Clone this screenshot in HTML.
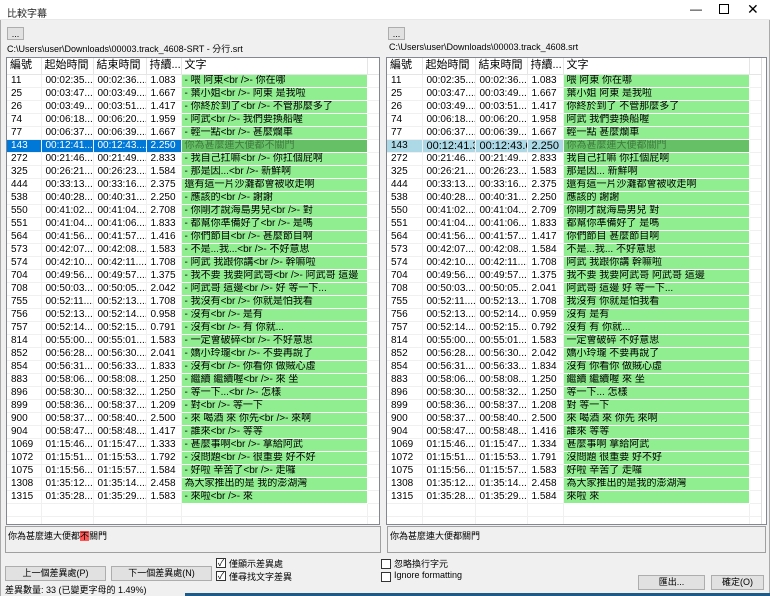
<!DOCTYPE html>
<html><head><meta charset="utf-8"><style>
*{margin:0;padding:0;box-sizing:border-box}
body{width:770px;height:596px;overflow:hidden;background:#f0f0f0;font-family:"Liberation Sans","Noto Sans CJK TC",sans-serif;font-size:11px;color:#000;position:relative}
.abs{position:absolute}
.title{left:0;top:0;width:770px;height:20px;background:#fff;border-bottom:1px solid #e8e8e8}
.btn{position:absolute;background:#e1e1e1;border:1px solid #adadad;font-size:9px;text-align:center;line-height:13px}
.list{position:absolute;top:57px;height:468px;background:#fff;border:1px solid #828790;overflow:hidden}
table{border-collapse:collapse;table-layout:fixed;position:absolute;left:0;top:0}
td,th{height:13px;line-height:12px;font-size:10px;white-space:nowrap;overflow:hidden;padding-left:4px;border-right:1px solid #f0f0f0;border-bottom:1px solid #f0f0f0;font-weight:normal;text-align:left}
th{height:16px;font-size:11px;line-height:15px;border-bottom:1px solid #e5e5e5;border-right:1px solid #e5e5e5;padding-left:3px}
td.t{background:#90ee90;border-right:1px solid #fff;border-bottom:1px solid #fff;font-size:10px;padding-left:3px;max-width:186px;text-overflow:clip}
tr.sel td{background:#0078d7;color:#fff}
tr.sel2 td{background:#add8e6;color:#000}
tr.sel td.t,tr.sel2 td.t{background:#66c066;color:#3d7a3d}
.tb{position:absolute;top:526px;height:27px;border:1px solid #a0a0a0;background:#f0f0f0;font-size:9px;padding:2px 2px}
.cb{position:absolute;width:10px;height:10px;border:1px solid #333;background:#fff;font-size:9px;line-height:8px;text-align:center}
.lbl{position:absolute;font-size:9px}
</style></head><body>
<div class="abs title"></div>
<div class="abs" style="left:7px;top:5px;font-size:10px;color:#222">比較字幕</div>
<div class="abs" style="left:690px;top:2px;font-size:12px">—</div>
<div class="abs" style="left:719px;top:4px;width:10px;height:10px;border:1px solid #000"></div>
<div class="abs" style="left:747px;top:1px;font-size:14px">✕</div>
<div class="abs" style="left:0;top:20px;width:1px;height:576px;background:#aaa"></div>
<div class="abs" style="left:769px;top:20px;width:1px;height:576px;background:#aaa"></div>

<div class="btn" style="left:7px;top:27px;width:17px;height:13px">...</div>
<div class="btn" style="left:388px;top:27px;width:17px;height:13px">...</div>
<div class="abs" style="left:7px;top:42px;font-size:9px">C:\Users\user\Downloads\00003.track_4608-SRT - 分行.srt</div>
<div class="abs" style="left:389px;top:42px;font-size:9px">C:\Users\user\Downloads\00003.track_4608.srt</div>

<div class="list" style="left:6px;width:374px">
<table style="width:372px">
<colgroup><col style="width:34px"><col style="width:52px"><col style="width:53px"><col style="width:35px"><col style="width:186px"><col style="width:12px"></colgroup>
<tr><th>編號</th><th>起始時間</th><th>結束時間</th><th>持續...</th><th>文字</th><th></th></tr>
<tr><td>11</td><td>00:02:35....</td><td>00:02:36....</td><td>1.083</td><td class="t">- 喂 阿東&lt;br /&gt;- 你在哪</td><td></td></tr>
<tr><td>25</td><td>00:03:47....</td><td>00:03:49....</td><td>1.667</td><td class="t">- 葉小姐&lt;br /&gt;- 阿東 是我啦</td><td></td></tr>
<tr><td>26</td><td>00:03:49....</td><td>00:03:51....</td><td>1.417</td><td class="t">- 你終於到了&lt;br /&gt;- 不管那麼多了</td><td></td></tr>
<tr><td>74</td><td>00:06:18....</td><td>00:06:20....</td><td>1.959</td><td class="t">- 阿武&lt;br /&gt;- 我們要換船喔</td><td></td></tr>
<tr><td>77</td><td>00:06:37....</td><td>00:06:39....</td><td>1.667</td><td class="t">- 輕一點&lt;br /&gt;- 甚麼爛車</td><td></td></tr>
<tr class="sel"><td>143</td><td>00:12:41....</td><td>00:12:43....</td><td>2.250</td><td class="t">你為甚麼連大便都不關門</td><td style="background:#fff"></td></tr>
<tr><td>272</td><td>00:21:46....</td><td>00:21:49....</td><td>2.833</td><td class="t">- 我自己扛嘛&lt;br /&gt;- 你扛個屁啊</td><td></td></tr>
<tr><td>325</td><td>00:26:21....</td><td>00:26:23....</td><td>1.584</td><td class="t">- 那是因...&lt;br /&gt;- 新鮮啊</td><td></td></tr>
<tr><td>444</td><td>00:33:13....</td><td>00:33:16....</td><td>2.375</td><td class="t">還有這一片沙灘都會被收走啊</td><td></td></tr>
<tr><td>538</td><td>00:40:28....</td><td>00:40:31....</td><td>2.250</td><td class="t">- 應該的&lt;br /&gt;- 謝謝</td><td></td></tr>
<tr><td>550</td><td>00:41:02....</td><td>00:41:04....</td><td>2.708</td><td class="t">- 你剛才說海島男兒&lt;br /&gt;- 對</td><td></td></tr>
<tr><td>551</td><td>00:41:04....</td><td>00:41:06....</td><td>1.833</td><td class="t">- 都幫你準備好了&lt;br /&gt;- 是嗎</td><td></td></tr>
<tr><td>564</td><td>00:41:56....</td><td>00:41:57....</td><td>1.416</td><td class="t">- 你們節目&lt;br /&gt;- 甚麼節目啊</td><td></td></tr>
<tr><td>573</td><td>00:42:07....</td><td>00:42:08....</td><td>1.583</td><td class="t">- 不是...我...&lt;br /&gt;- 不好意思</td><td></td></tr>
<tr><td>574</td><td>00:42:10....</td><td>00:42:11....</td><td>1.708</td><td class="t">- 阿武 我跟你講&lt;br /&gt;- 幹嘛啦</td><td></td></tr>
<tr><td>704</td><td>00:49:56....</td><td>00:49:57....</td><td>1.375</td><td class="t">- 我不要 我要阿武哥&lt;br /&gt;- 阿武哥 這邊</td><td></td></tr>
<tr><td>708</td><td>00:50:03....</td><td>00:50:05....</td><td>2.042</td><td class="t">- 阿武哥 這邊&lt;br /&gt;- 好 等一下...</td><td></td></tr>
<tr><td>755</td><td>00:52:11....</td><td>00:52:13....</td><td>1.708</td><td class="t">- 我沒有&lt;br /&gt;- 你就是怕我看</td><td></td></tr>
<tr><td>756</td><td>00:52:13....</td><td>00:52:14....</td><td>0.958</td><td class="t">- 沒有&lt;br /&gt;- 是有</td><td></td></tr>
<tr><td>757</td><td>00:52:14....</td><td>00:52:15....</td><td>0.791</td><td class="t">- 沒有&lt;br /&gt;- 有 你就...</td><td></td></tr>
<tr><td>814</td><td>00:55:00....</td><td>00:55:01....</td><td>1.583</td><td class="t">- 一定會破碎&lt;br /&gt;- 不好意思</td><td></td></tr>
<tr><td>852</td><td>00:56:28....</td><td>00:56:30....</td><td>2.041</td><td class="t">- 嬌小玲瓏&lt;br /&gt;- 不要再說了</td><td></td></tr>
<tr><td>854</td><td>00:56:31....</td><td>00:56:33....</td><td>1.833</td><td class="t">- 沒有&lt;br /&gt;- 你看你 做賊心虛</td><td></td></tr>
<tr><td>883</td><td>00:58:06....</td><td>00:58:08....</td><td>1.250</td><td class="t">- 繼續 繼續喔&lt;br /&gt;- 來 坐</td><td></td></tr>
<tr><td>896</td><td>00:58:30....</td><td>00:58:32....</td><td>1.250</td><td class="t">- 等一下...&lt;br /&gt;- 怎樣</td><td></td></tr>
<tr><td>899</td><td>00:58:36....</td><td>00:58:37....</td><td>1.209</td><td class="t">- 對&lt;br /&gt;- 等一下</td><td></td></tr>
<tr><td>900</td><td>00:58:37....</td><td>00:58:40....</td><td>2.500</td><td class="t">- 來 喝酒 來 你先&lt;br /&gt;- 來啊</td><td></td></tr>
<tr><td>904</td><td>00:58:47....</td><td>00:58:48....</td><td>1.417</td><td class="t">- 誰來&lt;br /&gt;- 等等</td><td></td></tr>
<tr><td>1069</td><td>01:15:46....</td><td>01:15:47....</td><td>1.333</td><td class="t">- 甚麼事啊&lt;br /&gt;- 拿給阿武</td><td></td></tr>
<tr><td>1072</td><td>01:15:51....</td><td>01:15:53....</td><td>1.792</td><td class="t">- 沒問題&lt;br /&gt;- 很重要 好不好</td><td></td></tr>
<tr><td>1075</td><td>01:15:56....</td><td>01:15:57....</td><td>1.584</td><td class="t">- 好啦 辛苦了&lt;br /&gt;- 走囉</td><td></td></tr>
<tr><td>1308</td><td>01:35:12....</td><td>01:35:14....</td><td>2.458</td><td class="t">為大家推出的是 我的澎湖灣</td><td></td></tr>
<tr><td>1315</td><td>01:35:28....</td><td>01:35:29....</td><td>1.583</td><td class="t">- 來啦&lt;br /&gt;- 來</td><td></td></tr>
<tr><td></td><td></td><td></td><td></td><td></td><td></td></tr>
<tr><td></td><td></td><td></td><td></td><td></td><td></td></tr>
</table></div>

<div class="list" style="left:386px;width:381px">
<table style="width:374px">
<colgroup><col style="width:35px"><col style="width:53px"><col style="width:52px"><col style="width:36px"><col style="width:186px"><col style="width:12px"></colgroup>
<tr><th>編號</th><th>起始時間</th><th>結束時間</th><th>持續...</th><th>文字</th><th></th></tr>
<tr><td>11</td><td>00:02:35....</td><td>00:02:36....</td><td>1.083</td><td class="t">喂 阿東 你在哪</td><td></td></tr>
<tr><td>25</td><td>00:03:47....</td><td>00:03:49....</td><td>1.667</td><td class="t">葉小姐 阿東 是我啦</td><td></td></tr>
<tr><td>26</td><td>00:03:49....</td><td>00:03:51....</td><td>1.417</td><td class="t">你終於到了 不管那麼多了</td><td></td></tr>
<tr><td>74</td><td>00:06:18....</td><td>00:06:20....</td><td>1.958</td><td class="t">阿武 我們要換船喔</td><td></td></tr>
<tr><td>77</td><td>00:06:37....</td><td>00:06:39....</td><td>1.667</td><td class="t">輕一點 甚麼爛車</td><td></td></tr>
<tr class="sel2"><td>143</td><td style="font-size:11px">00:12:41.37</td><td style="font-size:11px">00:12:43.62</td><td style="font-size:11px">2.250</td><td class="t">你為甚麼連大便都關門</td><td style="background:#fff"></td></tr>
<tr><td>272</td><td>00:21:46....</td><td>00:21:49....</td><td>2.833</td><td class="t">我自己扛嘛 你扛個屁啊</td><td></td></tr>
<tr><td>325</td><td>00:26:21....</td><td>00:26:23....</td><td>1.583</td><td class="t">那是因... 新鮮啊</td><td></td></tr>
<tr><td>444</td><td>00:33:13....</td><td>00:33:16....</td><td>2.375</td><td class="t">還有這一片沙灘都會被收走啊</td><td></td></tr>
<tr><td>538</td><td>00:40:28....</td><td>00:40:31....</td><td>2.250</td><td class="t">應該的 謝謝</td><td></td></tr>
<tr><td>550</td><td>00:41:02....</td><td>00:41:04....</td><td>2.709</td><td class="t">你剛才說海島男兒 對</td><td></td></tr>
<tr><td>551</td><td>00:41:04....</td><td>00:41:06....</td><td>1.833</td><td class="t">都幫你準備好了 是嗎</td><td></td></tr>
<tr><td>564</td><td>00:41:56....</td><td>00:41:57....</td><td>1.417</td><td class="t">你們節目 甚麼節目啊</td><td></td></tr>
<tr><td>573</td><td>00:42:07....</td><td>00:42:08....</td><td>1.584</td><td class="t">不是...我... 不好意思</td><td></td></tr>
<tr><td>574</td><td>00:42:10....</td><td>00:42:11....</td><td>1.708</td><td class="t">阿武 我跟你講 幹嘛啦</td><td></td></tr>
<tr><td>704</td><td>00:49:56....</td><td>00:49:57....</td><td>1.375</td><td class="t">我不要 我要阿武哥 阿武哥 這邊</td><td></td></tr>
<tr><td>708</td><td>00:50:03....</td><td>00:50:05....</td><td>2.041</td><td class="t">阿武哥 這邊 好 等一下...</td><td></td></tr>
<tr><td>755</td><td>00:52:11....</td><td>00:52:13....</td><td>1.708</td><td class="t">我沒有 你就是怕我看</td><td></td></tr>
<tr><td>756</td><td>00:52:13....</td><td>00:52:14....</td><td>0.959</td><td class="t">沒有 是有</td><td></td></tr>
<tr><td>757</td><td>00:52:14....</td><td>00:52:15....</td><td>0.792</td><td class="t">沒有 有 你就...</td><td></td></tr>
<tr><td>814</td><td>00:55:00....</td><td>00:55:01....</td><td>1.583</td><td class="t">一定會破碎 不好意思</td><td></td></tr>
<tr><td>852</td><td>00:56:28....</td><td>00:56:30....</td><td>2.042</td><td class="t">嬌小玲瓏 不要再說了</td><td></td></tr>
<tr><td>854</td><td>00:56:31....</td><td>00:56:33....</td><td>1.834</td><td class="t">沒有 你看你 做賊心虛</td><td></td></tr>
<tr><td>883</td><td>00:58:06....</td><td>00:58:08....</td><td>1.250</td><td class="t">繼續 繼續喔 來 坐</td><td></td></tr>
<tr><td>896</td><td>00:58:30....</td><td>00:58:32....</td><td>1.250</td><td class="t">等一下... 怎樣</td><td></td></tr>
<tr><td>899</td><td>00:58:36....</td><td>00:58:37....</td><td>1.208</td><td class="t">對 等一下</td><td></td></tr>
<tr><td>900</td><td>00:58:37....</td><td>00:58:40....</td><td>2.500</td><td class="t">來 喝酒 來 你先 來啊</td><td></td></tr>
<tr><td>904</td><td>00:58:47....</td><td>00:58:48....</td><td>1.416</td><td class="t">誰來 等等</td><td></td></tr>
<tr><td>1069</td><td>01:15:46....</td><td>01:15:47....</td><td>1.334</td><td class="t">甚麼事啊 拿給阿武</td><td></td></tr>
<tr><td>1072</td><td>01:15:51....</td><td>01:15:53....</td><td>1.791</td><td class="t">沒問題 很重要 好不好</td><td></td></tr>
<tr><td>1075</td><td>01:15:56....</td><td>01:15:57....</td><td>1.583</td><td class="t">好啦 辛苦了 走囉</td><td></td></tr>
<tr><td>1308</td><td>01:35:12....</td><td>01:35:14....</td><td>2.458</td><td class="t">為大家推出的是我的澎湖灣</td><td></td></tr>
<tr><td>1315</td><td>01:35:28....</td><td>01:35:29....</td><td>1.584</td><td class="t">來啦 來</td><td></td></tr>
<tr><td></td><td></td><td></td><td></td><td></td><td></td></tr>
<tr><td></td><td></td><td></td><td></td><td></td><td></td></tr>
</table>
<div class="abs" style="left:374px;top:0;width:6px;height:468px;background:#fff;border-left:1px solid #ddd"></div>
</div>

<div class="tb" style="left:5px;width:376px">你為甚麼連大便都<span style="background:#f55">不</span>關門</div>
<div class="tb" style="left:387px;width:379px">你為甚麼連大便都關門</div>

<div class="cb" style="left:216px;top:558px">✓</div><div class="lbl" style="left:229px;top:557px">僅顯示差異處</div>
<div class="cb" style="left:216px;top:571px">✓</div><div class="lbl" style="left:229px;top:570px">僅尋找文字差異</div>
<div class="cb" style="left:381px;top:559px"></div><div class="lbl" style="left:394px;top:557px">忽略換行字元</div>
<div class="cb" style="left:381px;top:572px"></div><div class="lbl" style="left:394px;top:570px">Ignore formatting</div>

<div class="btn" style="left:5px;top:566px;width:101px;height:15px;line-height:13px">上一個差異處(P)</div>
<div class="btn" style="left:111px;top:566px;width:101px;height:15px;line-height:13px">下一個差異處(N)</div>
<div class="btn" style="left:638px;top:575px;width:67px;height:15px;line-height:13px">匯出...</div>
<div class="btn" style="left:711px;top:575px;width:53px;height:15px;line-height:13px">確定(O)</div>
<div class="lbl" style="left:5px;top:583px">差異數量: 33 (已變更字母的 1.49%)</div>
<div class="abs" style="left:185px;top:593px;width:585px;height:3px;background:#1c5a8a"></div>
</body></html>
